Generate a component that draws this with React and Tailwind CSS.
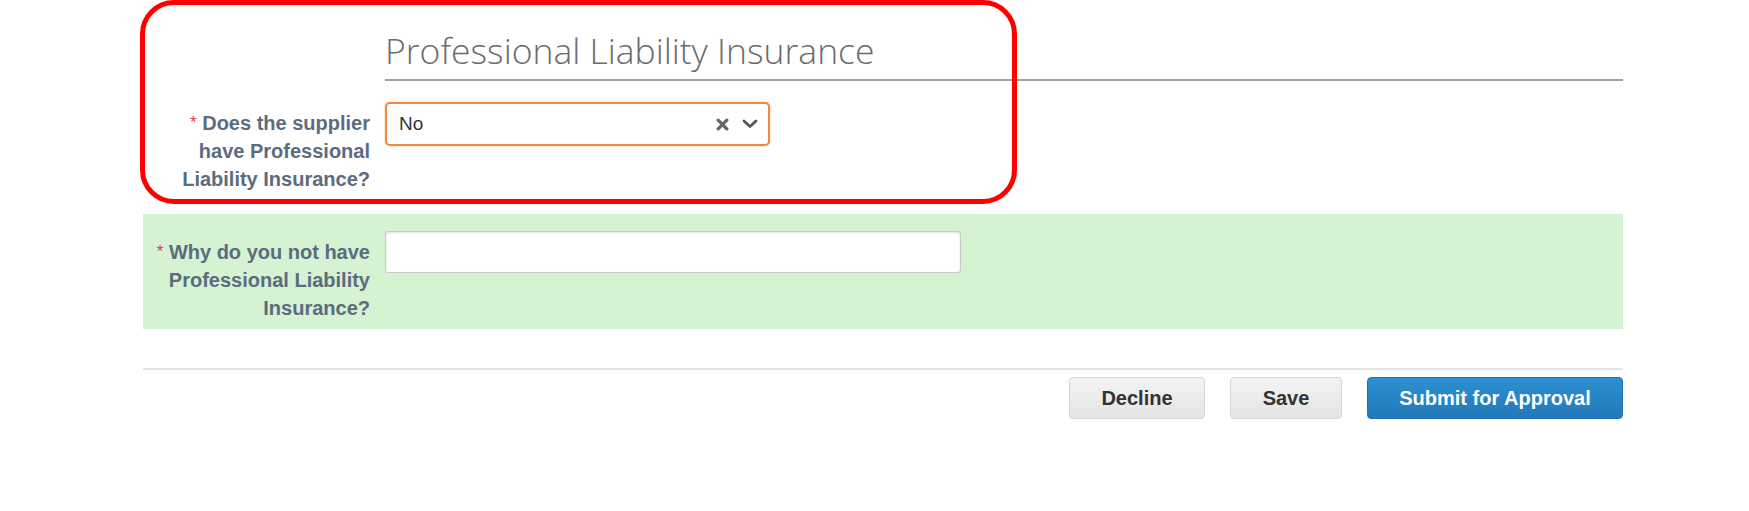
import { useState } from 'react';

const Label = ({ lines }) => (
    <div className="pt-[7px] text-right text-[20px] leading-[28px] font-bold text-[#5b6c80]">
        <span className="text-[#e23b3b] font-normal text-[17px] align-top">*</span>{' '}
        {lines.map((line, i) => (
            <span key={i}>
                {line}
                {i < lines.length - 1 && <br />}
            </span>
        ))}
    </div>
);

const App = () => {
    const [answer, setAnswer] = useState('No');
    const [reason, setReason] = useState('');

    return (
        <div className="relative min-h-[511px] bg-white font-['Liberation_Sans',Arial,sans-serif]">
            {/* Annotation highlight */}
            <div className="absolute left-[140px] top-0 w-[877px] h-[204px] border-[5px] border-[#ff0000] rounded-[34px] pointer-events-none"></div>

            <div className="ml-[143px] w-[1480px] pt-[28px]">
                {/* Section header */}
                <div className="ml-[242px] border-b-2 border-[#a3a3a3] pb-[7px]">
                    <h2 className="text-[35.5px] leading-[44px] font-light text-[#6b6b6b] font-['Open_Sans',sans-serif]">
                        Professional Liability Insurance
                    </h2>
                </div>

                {/* Question row */}
                <div className="mt-[21px] grid grid-cols-[227px_1fr] gap-x-[15px]">
                    <Label lines={['Does the supplier', 'have Professional', 'Liability Insurance?']} />
                    <div>
                        <div className="w-[385px] h-[44px] flex items-center justify-between pl-[12px] pr-[10px] border-2 border-[#f2883b] rounded-[5px] bg-white shadow-[0_0_2px_rgba(242,136,59,0.5)]">
                            <span className="text-[19px] text-[#333]">{answer}</span>
                            <div className="flex items-center gap-[13px]">
                                <button type="button" onClick={() => setAnswer('')} className="text-[#666]">
                                    <svg width="13" height="13" viewBox="0 0 12 12">
                                        <path d="M2 2 L10 10 M10 2 L2 10" stroke="currentColor" strokeWidth="3" strokeLinecap="round" />
                                    </svg>
                                </button>
                                <svg width="16" height="10" viewBox="0 0 16 10" className="text-[#555]">
                                    <path d="M2 2 L8 7.5 L14 2" fill="none" stroke="currentColor" strokeWidth="2.8" strokeLinecap="round" strokeLinejoin="round" />
                                </svg>
                            </div>
                        </div>
                    </div>
                </div>

                {/* Follow-up row */}
                <div className="mt-[21px] bg-[#d5f2d2] pt-[17px] pb-[7px] grid grid-cols-[227px_1fr] gap-x-[15px]">
                    <Label lines={['Why do you not have', 'Professional Liability', 'Insurance?']} />
                    <div>
                        <input
                            type="text"
                            value={reason}
                            onChange={(e) => setReason(e.target.value)}
                            className="w-[576px] h-[42px] px-3 bg-white border border-[#c9c9c9] rounded-[3px] shadow-[inset_0_1px_2px_rgba(0,0,0,0.12)] text-[19px] text-[#333] focus:outline-none"
                        />
                    </div>
                </div>

                {/* Actions */}
                <div className="mt-[39px] border-t-2 border-[#e5e5e5] pt-[7px] flex justify-end gap-[25px]">
                    <button className="w-[136px] h-[42px] rounded-[4px] border border-[#d6d6d6] bg-gradient-to-b from-[#f3f3f3] to-[#e4e4e4] text-[20px] font-bold text-[#333]">
                        Decline
                    </button>
                    <button className="w-[112px] h-[42px] rounded-[4px] border border-[#d6d6d6] bg-gradient-to-b from-[#f3f3f3] to-[#e4e4e4] text-[20px] font-bold text-[#333]">
                        Save
                    </button>
                    <button className="w-[256px] h-[42px] rounded-[4px] border border-[#2273b0] bg-gradient-to-b from-[#2b90d2] to-[#2378b9] text-[20px] font-bold text-white">
                        Submit for Approval
                    </button>
                </div>
            </div>
        </div>
    );
};

export default App;
